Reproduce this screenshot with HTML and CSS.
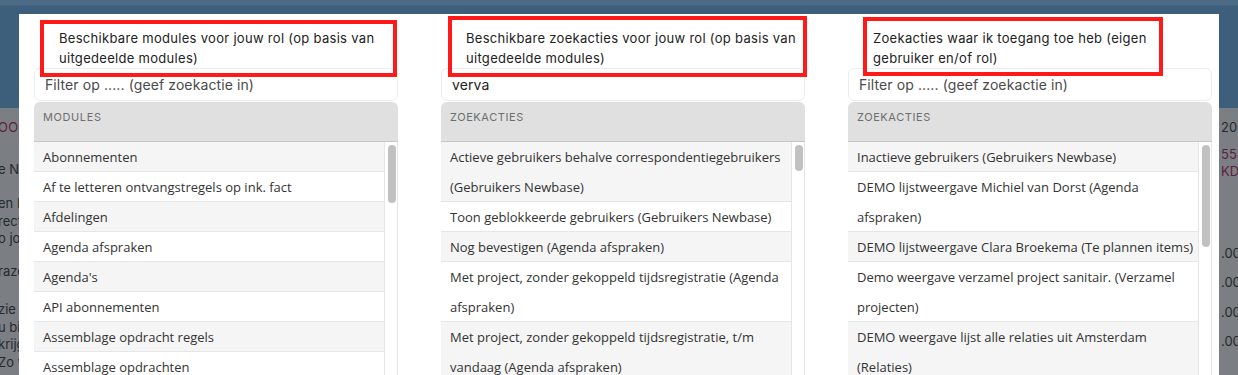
FILE: index.html
```html
<!DOCTYPE html>
<html lang="nl">
<head>
<meta charset="utf-8">
<title>Zoekacties</title>
<link rel="stylesheet" href="styles.css">
</head>
<body>
<div class="page">
  <div class="topbar"></div>
  <div class="pagebody">
    <div class="strip strip-left">
      <div class="frag maroon caps g1">OOD</div>
      <div class="frag g2">e Newbase</div>
      <div class="frag g3">en I</div>
      <div class="frag">rect</div>
      <div class="frag">o jouw</div>
      <div class="frag g4">raze</div>
      <div class="frag g5">zie</div>
      <div class="frag">u bij</div>
      <div class="frag">krijg</div>
      <div class="frag">Zo w</div>
    </div>
    <div class="strip strip-right">
      <div class="frag g1">2025</div>
      <div class="frag maroon g6">553</div>
      <div class="frag maroon">KD.</div>
      <div class="frag g7">.000</div>
      <div class="frag g8">.000</div>
      <div class="frag g8">.000</div>
      <div class="frag g8">.000</div>
    </div>
  </div>
</div>

<div class="modal">
  <div class="cols">
    <section class="col">
      <div class="label">Beschikbare modules voor jouw rol (op basis van<br>uitgedeelde modules)</div>
      <div class="annot annot-1"></div>
      <input class="filter" type="text" placeholder="Filter op ..... (geef zoekactie in)">
      <div class="head">Modules</div>
      <div class="list">
        <div class="rows">
          <div class="row">Abonnementen</div>
          <div class="row">Af te letteren ontvangstregels op ink. fact</div>
          <div class="row">Afdelingen</div>
          <div class="row">Agenda afspraken</div>
          <div class="row">Agenda's</div>
          <div class="row">API abonnementen</div>
          <div class="row">Assemblage opdracht regels</div>
          <div class="row">Assemblage opdrachten</div>
        </div>
        <div class="track"><div class="thumb thumb-1"></div></div>
      </div>
    </section>

    <section class="col">
      <div class="label">Beschikbare zoekacties voor jouw rol (op basis van<br>uitgedeelde modules)</div>
      <div class="annot annot-2"></div>
      <input class="filter" type="text" value="verva" placeholder="Filter op ..... (geef zoekactie in)">
      <div class="head">Zoekacties</div>
      <div class="list">
        <div class="rows">
          <div class="row">Actieve gebruikers behalve correspondentiegebruikers (Gebruikers Newbase)</div>
          <div class="row">Toon geblokkeerde gebruikers (Gebruikers Newbase)</div>
          <div class="row">Nog bevestigen (Agenda afspraken)</div>
          <div class="row">Met project, zonder gekoppeld tijdsregistratie (Agenda afspraken)</div>
          <div class="row">Met project, zonder gekoppeld tijdsregistratie, t/m vandaag (Agenda afspraken)</div>
        </div>
        <div class="track"><div class="thumb thumb-2"></div></div>
      </div>
    </section>

    <section class="col">
      <div class="label">Zoekacties waar ik toegang toe heb (eigen<br>gebruiker en/of rol)</div>
      <div class="annot annot-3"></div>
      <input class="filter" type="text" placeholder="Filter op ..... (geef zoekactie in)">
      <div class="head">Zoekacties</div>
      <div class="list">
        <div class="rows">
          <div class="row">Inactieve gebruikers (Gebruikers Newbase)</div>
          <div class="row">DEMO lijstweergave Michiel van Dorst (Agenda afspraken)</div>
          <div class="row">DEMO lijstweergave Clara Broekema (Te plannen items)</div>
          <div class="row">Demo weergave verzamel project sanitair. (Verzamel projecten)</div>
          <div class="row">DEMO weergave lijst alle relaties uit Amsterdam (Relaties)</div>
        </div>
        <div class="track"><div class="thumb thumb-3"></div></div>
      </div>
    </section>
  </div>
</div>
</body>
</html>
```

FILE: styles.css
```css
html, body {
  margin: 0;
  padding: 0;
}
body {
  width: 1238px;
  height: 375px;
  overflow: hidden;
  background: #7b7f84;
  font-family: Inter, "Noto Sans", sans-serif;
}

/* dimmed page behind the modal */
.page {
  height: 375px;
}
.topbar {
  height: 108px;
  background: linear-gradient(180deg, #4a6a86 0px, #4a6a86 5px, #3d5f7c 6px, #3d5f7c 100%);
}
.pagebody {
  display: flex;
  justify-content: space-between;
  height: 267px;
}
.strip {
  width: 19px;
  overflow: hidden;
  font-size: 13px;
  line-height: 17.5px;
  color: #25292d;
  white-space: nowrap;
}
.strip-left .frag {
  margin-left: -2px;
}
.strip-right .frag {
  margin-left: 2px;
}
.maroon { color: #5e1f3d; }
.caps { letter-spacing: 0.3px; }
.g1 { margin-top: 11px; }
.g2 { margin-top: 24px; }
.g3 { margin-top: 17px; }
.g4 { margin-top: 15px; }
.g5 { margin-top: 21px; }
.g6 { margin-top: 9px; }
.g7 { margin-top: 64px; }
.g8 { margin-top: 12px; }

/* modal */
.modal {
  position: fixed;
  left: 19px;
  top: 14px;
  width: 1200px;
  height: 420px;
  background: #fff;
  box-sizing: border-box;
  padding: 0 7px 0 15px;
}
.cols {
  display: grid;
  grid-template-columns: repeat(3, 364px);
  column-gap: 43px;
}
.col {
  position: relative;
}
.label {
  height: 39px;
  padding: 15px 0 0 25px;
  font-family: Inter, "Noto Sans", sans-serif;
  font-size: 13px;
  letter-spacing: 0.3px;
  line-height: 19.5px;
  color: #222;
  white-space: nowrap;
}
.annot {
  position: absolute;
  border: 4px solid #ff1a1a;
  box-sizing: border-box;
  pointer-events: none;
}
.annot-1 { left: 6px; top: 6px; width: 357px; height: 57px; }
.annot-2 { left: 7px; top: 2px; width: 359px; height: 61px; }
.annot-3 { left: 15px; top: 3px; width: 300px; height: 59px; }

.filter {
  display: block;
  width: 100%;
  height: 33px;
  box-sizing: border-box;
  margin: 0;
  padding: 0 10px;
  border: 1px solid #ececec;
  border-radius: 6px;
  background: #fff;
  outline: none;
  font-family: Inter, "Noto Sans", sans-serif;
  font-size: 14px;
  letter-spacing: 0.1px;
  color: #222;
}
.filter::placeholder {
  color: #4a4a4a;
  opacity: 1;
}
.head {
  margin-top: 1px;
  height: 40px;
  box-sizing: border-box;
  padding: 8px 0 0 9px;
  background: #e0e0e0;
  border-bottom: 1px solid #c3c7cd;
  border-radius: 6px 6px 0 0;
  font-size: 11px;
  line-height: 15px;
  color: #6e6e6e;
  text-transform: uppercase;
  letter-spacing: 0.6px;
}
.list {
  display: flex;
  border-right: 1px solid #e6e6e6;
}
.rows {
  flex: 1;
}
.row {
  padding-left: 9px;
  font-family: "Open Sans", sans-serif;
  font-size: 13px;
  line-height: 30px;
  color: #333;
  background: #fff;
  box-shadow: inset 0 -1px 0 #e6e6e6;
}
.row:nth-child(odd) {
  background: #f5f5f5;
}
.track {
  width: 13px;
  border-left: 1px solid #e6e6e6;
  box-sizing: border-box;
  background: #fff;
}
.thumb {
  width: 8px;
  margin: 3px 0 0 3px;
  border-radius: 4px;
  background: #c1c1c1;
}
.thumb-1 { height: 58px; }
.thumb-2 { height: 26px; }
.thumb-3 { height: 102px; }
```
